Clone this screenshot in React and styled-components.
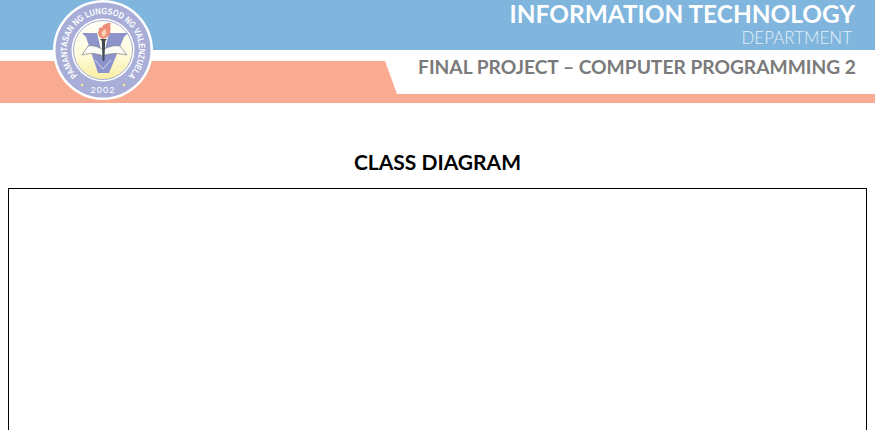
import React from 'react';
import styled, { createGlobalStyle } from 'styled-components';

const GlobalStyle = createGlobalStyle`
  html, body {
    margin: 0;
    height: 100%;
    overflow: hidden;
    background: #fff;
  }
`;

const Page = styled.div`
  width: 875px;
  height: 430px;
  overflow: hidden;
  position: relative;
`;

const Banner = styled.header`
  position: relative;
  display: flex;
  flex-direction: column;
`;

const BlueBar = styled.div`
  height: 50px;
  box-sizing: border-box;
  background: #80b6dd;
  padding-right: 20px;
  display: flex;
  flex-direction: column;
  align-items: flex-end;
  color: #fff;
  font-family: "Lato", "Liberation Sans", sans-serif;
`;

const DeptName = styled.div`
  font-size: 24.4px;
  font-weight: 700;
  line-height: 27px;
`;

const DeptSub = styled.div`
  font-size: 17px;
  font-weight: 300;
  line-height: 20px;
  margin-top: 1px;
  margin-right: 3px;
  color: #e3eff8;
`;

const LowerRow = styled.div`
  height: 44px;
  display: flex;
`;

const Wedge = styled.div`
  width: 397px;
  margin-top: 11px;
  background: #f9ab91;
  clip-path: polygon(0 0, 385px 0, 397px 100%, 0 100%);
`;

const ProjectTitle = styled.div`
  flex: 1;
  padding: 4px 19px 0 0;
  text-align: right;
  font-family: "Lato", "Liberation Sans", sans-serif;
  font-size: 19.2px;
  font-weight: 700;
  line-height: 26px;
  color: #7a7a7a;
`;

const SalmonStrip = styled.div`
  height: 9px;
  background: #f9ab91;
`;

const LogoMark = styled.svg`
  position: absolute;
  left: 53px;
  top: 0;
  width: 100px;
  height: 100px;
`;

const Content = styled.main`
  padding: 46px 8px 0;
  display: flex;
  flex-direction: column;
  align-items: center;
`;

const Heading = styled.h1`
  margin: 0 0 13px;
  font-family: "Lato", "Liberation Sans", sans-serif;
  font-size: 21px;
  font-weight: 700;
  line-height: 26px;
  color: #000;
`;

const DiagramFrame = styled.div`
  align-self: stretch;
  height: 400px;
  border: 1px solid #000;
`;

const Logo = () => (
  <LogoMark viewBox="0 0 100 100" aria-label="Pamantasan ng Lungsod ng Valenzuela seal">
    <defs>
      <linearGradient id="seal" x1="0" y1="0" x2="0" y2="1">
        <stop offset="0%" stopColor="#fffff6" />
        <stop offset="55%" stopColor="#fffde0" />
        <stop offset="100%" stopColor="#f9eda0" />
      </linearGradient>
      <path id="topArc" d="M 24.5 75.5 A 36 36 0 1 1 75.5 75.5" />
    </defs>
    <circle cx="50" cy="50" r="50" fill="#fff" />
    <circle cx="50" cy="50" r="47.5" fill="#a8aed8" />
    <circle cx="50" cy="50" r="31.5" fill="#fff" />
    <circle cx="50" cy="50" r="29.5" fill="url(#seal)" stroke="#a4a9d6" strokeWidth="1" />
    <text fontFamily="Liberation Sans, sans-serif" fontSize="9" fontWeight="700" fill="#fff">
      <textPath href="#topArc" textLength="170" lengthAdjust="spacingAndGlyphs">PAMANTASAN NG LUNGSOD NG VALENZUELA</textPath>
    </text>
    <text x="50" y="92.5" textAnchor="middle" fontFamily="Liberation Sans, sans-serif" fontSize="9.5" fill="#fff" letterSpacing="1">2002</text>
    <circle cx="29" cy="85" r="1.3" fill="#f3ee9c" />
    <circle cx="71" cy="85" r="1.3" fill="#f3ee9c" />
    {/* big V */}
    <path d="M29 33 H44 L50 58 L56 33 H75 L71 37 L56 73 H45 L33 37 Z" fill="#8d93cb" />
    <path d="M42 60 L50 69 L58 60" fill="none" stroke="#d5d8ee" strokeWidth="1" />
    {/* open book */}
    <path d="M29 55 L35 46 C41 45 46 47 50 50 C54 47 60 45 67 46 L74 55 C66 53 57 53 50 56 C43 53 36 53 29 55 Z" fill="#fbfbf6" stroke="#7d7d80" strokeWidth="0.7" />
    {/* torch */}
    <path d="M47 39 H54 L52.2 41 L51.4 61 H49.6 L48.8 41 Z" fill="#3f4a55" />
    {/* flame */}
    <path d="M50 39 C45 37 44 33 46 30 C45 28 47 27 49 28 C49 25 53 23 58 23 C56 26 59 28 57 31 C58 34 55 38 50 39 Z" fill="#ef8f7a" />
    <path d="M50.5 37 C48 35 48 32 50 31 C50 29 52 29 53 30 C53 32 55 33 50.5 37 Z" fill="#f9d2b2" />
  </LogoMark>
);

const App = () => (
  <Page>
    <GlobalStyle />
    <Banner>
      <BlueBar>
        <DeptName>INFORMATION TECHNOLOGY</DeptName>
        <DeptSub>DEPARTMENT</DeptSub>
      </BlueBar>
      <LowerRow>
        <Wedge />
        <ProjectTitle>FINAL PROJECT – COMPUTER PROGRAMMING 2</ProjectTitle>
      </LowerRow>
      <SalmonStrip />
      <Logo />
    </Banner>
    <Content>
      <Heading>CLASS DIAGRAM</Heading>
      <DiagramFrame />
    </Content>
  </Page>
);

export default App;
